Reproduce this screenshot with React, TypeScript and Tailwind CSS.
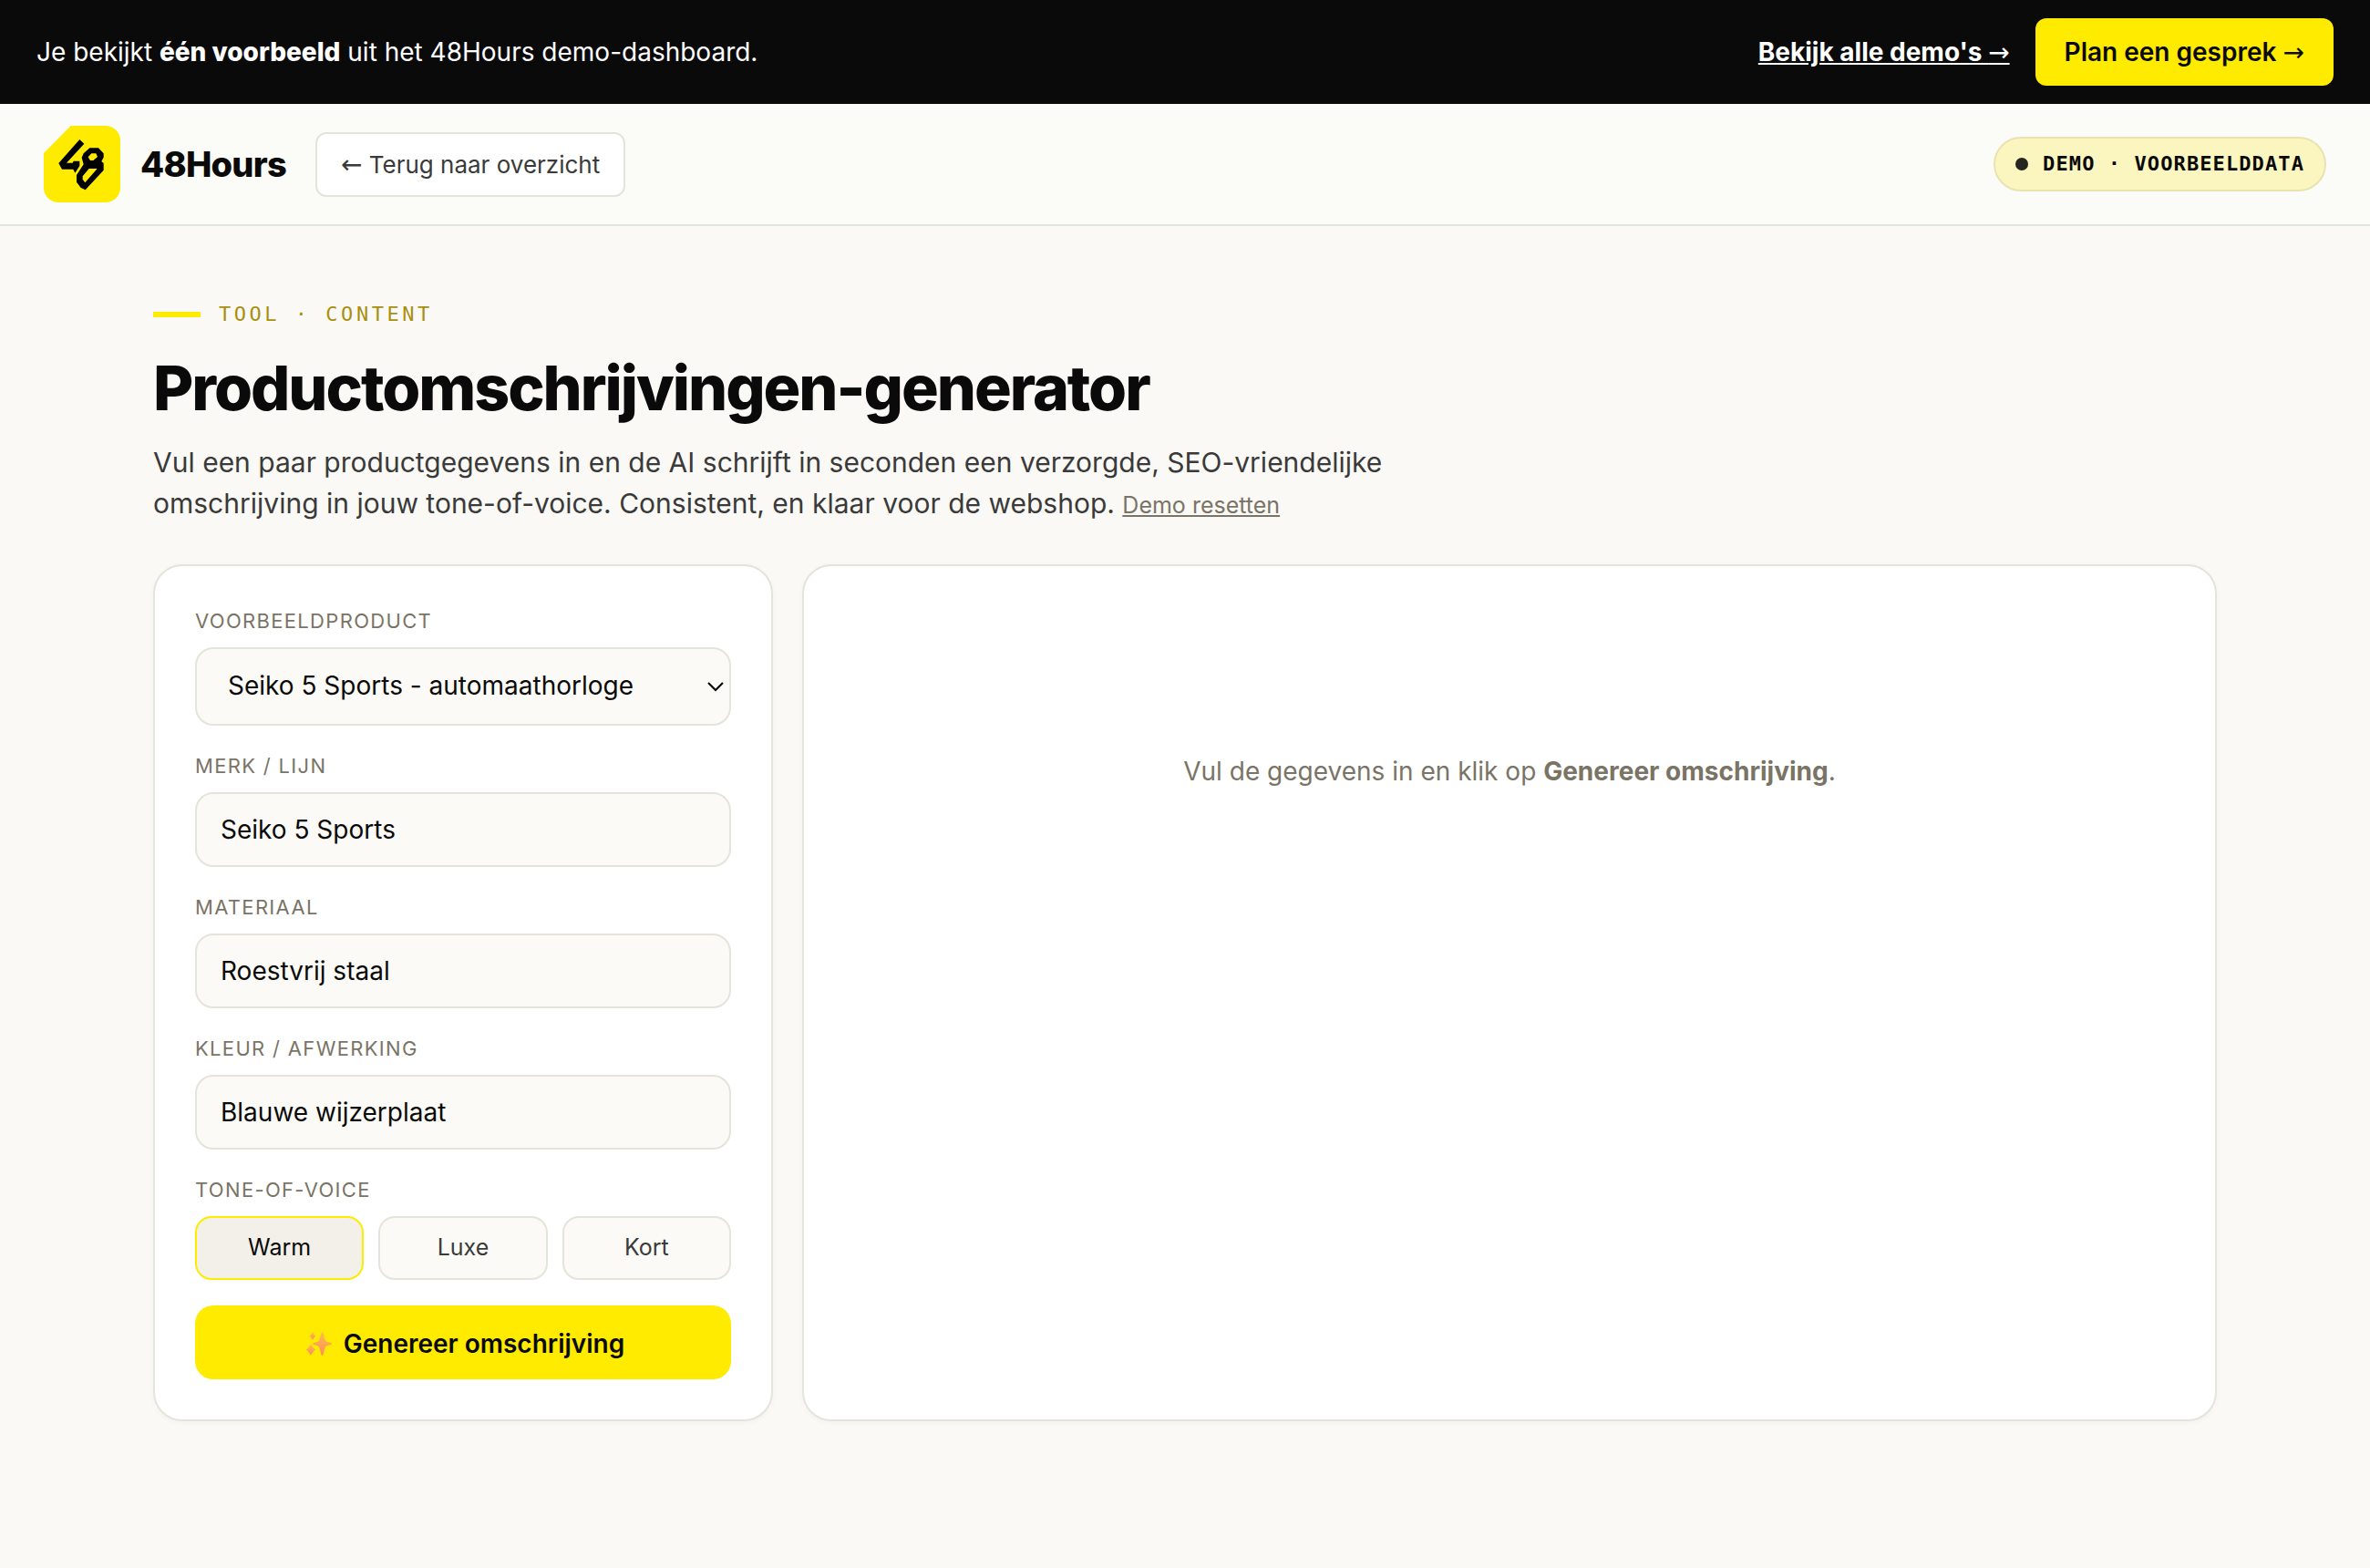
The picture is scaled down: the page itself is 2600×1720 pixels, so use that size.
import { useState } from 'react';

const products = [
  {
    name: 'Seiko 5 Sports - automaathorloge',
    brand: 'Seiko 5 Sports',
    material: 'Roestvrij staal',
    finish: 'Blauwe wijzerplaat'
  }
];

const tones = ['Warm', 'Luxe', 'Kort'];

const labelClasses = 'block mb-3 text-[22px] leading-[33px] tracking-[0.06em] uppercase text-[#7a7466]';

const fieldClasses = 'block w-full rounded-[20px] border-2 border-[#e5e3da] bg-[#fbfaf7] text-[28px] leading-[34px] text-[#0a0a0a] focus:outline-none focus:border-[#ffeb00]';

const cardClasses = 'rounded-[32px] border-2 border-[#e5e3da] bg-white p-11 shadow-[0_2px_6px_rgba(0,0,0,0.03)]';

function Logo() {
  return (
    <svg viewBox="0 0 252 252" className="size-[84px] shrink-0" aria-hidden="true">
      <path d="M89 0H204A48 48 0 0 1 252 48V204A48 48 0 0 1 204 252H48A48 48 0 0 1 0 204V90Z" fill="#ffeb00" />
      <g fill="#000" fillRule="evenodd">
        <path d="M118 45L133 59L75 122H95L98 116H118V132L103 155L97 143H60L49 123Z" />
        <path d="M151 73H180L197 91V104L190 117L197 123V146L137 211L122 204L108 185V162L131 127L125 105L131 91ZM157 91L146 103L153 114H163L177 102L172 91ZM149 141L128 166V176L136 187L176 141Z" />
      </g>
    </svg>
  );
}

function Sparkles() {
  return (
    <svg viewBox="0 0 30 30" className="size-[30px] shrink-0" aria-hidden="true">
      <defs>
        <linearGradient id="spark" x1="0" y1="0" x2="0" y2="1">
          <stop offset="0" stopColor="#fbc044" />
          <stop offset="1" stopColor="#ff8a65" />
        </linearGradient>
      </defs>
      <g fill="url(#spark)">
        <path d="M18.500 2C20 2 20.500 9 22 11.500C23.500 13.500 29 13.700 29 15C29 16.300 23.500 16.500 22 18.500C20.500 21 20 28 18.500 28C17 28 16.500 21 15 18.500C13.500 16.500 8 16.300 8 15C8 13.700 13.500 13.500 15 11.500C16.500 9 17 2 18.500 2Z" />
        <path d="M8 2.500C8.900 2.500 9 5.200 11.500 6.500C9 7.700 8.900 10.500 8 10.500C7.100 10.500 7 7.700 4.500 6.500C7 5.200 7.100 2.500 8 2.500Z" />
        <path d="M6 15.500C7.200 15.500 7.500 19.800 11.500 21.500C7.500 23.200 7.200 27.500 6 27.500C4.800 27.500 4.500 23.200 0.500 21.500C4.500 19.800 4.800 15.500 6 15.500Z" />
      </g>
    </svg>
  );
}

interface TextFieldProps {
  id: string;
  label: string;
  value: string;
  onChange: (value: string) => void;
}

function TextField({ id, label, value, onChange }: TextFieldProps) {
  return (
    <div>
      <label htmlFor={id} className={labelClasses}>{label}</label>
      <input
        id={id}
        type="text"
        value={value}
        onChange={(e) => onChange(e.target.value)}
        className={`${fieldClasses} h-[82px] px-[26px]`}
      />
    </div>
  );
}

function Arrow({ children }: { children: string }) {
  return <span className="font-['DejaVu_Sans',sans-serif] text-[28px] leading-none font-normal">{children}</span>;
}

function DemoBar() {
  return (
    <div className="flex items-center justify-between gap-6 bg-[#0a0a0a] px-10 py-5 text-[28px] leading-[42px] text-white">
      <p>
        Je bekijkt <strong className="font-extrabold">één voorbeeld</strong> uit het 48Hours demo-dashboard.
      </p>
      <div className="flex items-center gap-7">
        <a href="#demos" className="font-bold underline">
          Bekijk alle demo's <Arrow>→</Arrow>
        </a>
        <a href="#gesprek" className="rounded-xl bg-[#ffeb00] px-8 py-4 font-semibold text-[#0a0a0a]">
          Plan een gesprek <Arrow>→</Arrow>
        </a>
      </div>
    </div>
  );
}

function Header() {
  return (
    <header className="flex items-center justify-between border-b-2 border-[#e5e3da] bg-[#fbfbf7] px-12 py-6">
      <div className="flex items-center gap-8">
        <div className="flex items-center gap-[22px]">
          <Logo />
          <span className="text-[38px] font-extrabold tracking-[-0.02em]">48Hours</span>
        </div>
        <a
          href="#overzicht"
          className="rounded-xl border-2 border-[#e5e3da] bg-white px-[26px] py-[14px] text-[26px] leading-[39px] text-[#3a3a3a]"
        >
          <Arrow>←</Arrow> Terug naar overzicht
        </a>
      </div>
      <div className="flex items-center gap-4 rounded-full border-2 border-[#e8e3b0] bg-[#fbf6c0] px-[22px] py-3 font-['DejaVu_Sans_Mono',monospace] text-[22px] leading-8 font-bold tracking-[0.05em]">
        <span className="size-[14px] rounded-full bg-[#25261f]" />
        DEMO · VOORBEELDDATA
      </div>
    </header>
  );
}

export default function App() {
  const [productIndex, setProductIndex] = useState(0);
  const [fields, setFields] = useState(products[0]);
  const [tone, setTone] = useState('Warm');

  const selectProduct = (index: number) => {
    setProductIndex(index);
    setFields(products[index]);
  };

  const reset = () => {
    selectProduct(0);
    setTone('Warm');
  };

  return (
    <div className="min-h-screen bg-[#faf9f6] font-['Inter',sans-serif] text-[#0a0a0a]">
      <DemoBar />
      <Header />

      <main className="mx-auto max-w-[2360px] px-12 pt-20 pb-40">
        <div className="mb-7 flex items-center gap-5 font-['DejaVu_Sans_Mono',monospace] text-[22px] leading-[33px] tracking-[0.16em] text-[#a8900f]">
          <span className="h-[6px] w-[52px] bg-[#ffeb00]" />
          TOOL · CONTENT
        </div>
        <h1 className="mb-6 text-[68px] leading-[72px] font-extrabold tracking-[-0.03em]">
          Productomschrijvingen-generator
        </h1>
        <p className="mb-11 max-w-[1400px] text-[30px] leading-[45px] text-[#3a3a3a]">
          Vul een paar productgegevens in en de AI schrijft in seconden een verzorgde, SEO-vriendelijke
          omschrijving in jouw tone-of-voice. Consistent, en klaar voor de webshop.{' '}
          <button type="button" onClick={reset} className="text-[25px] leading-[30px] text-[#7a7466] underline">
            Demo resetten
          </button>
        </p>

        <div className="grid grid-cols-[680px_1fr] gap-8">
          <form onSubmit={(e) => e.preventDefault()} className={`${cardClasses} flex flex-col gap-7`}>
            <div>
              <label htmlFor="product" className={labelClasses}>Voorbeeldproduct</label>
              <div className="relative">
                <select
                  id="product"
                  value={productIndex}
                  onChange={(e) => selectProduct(Number(e.target.value))}
                  className={`${fieldClasses} h-[86px] appearance-none pr-12 pb-0.5 pl-[34px]`}
                >
                  {products.map((product, index) => (
                    <option key={product.name} value={index}>{product.name}</option>
                  ))}
                </select>
                <svg
                  viewBox="0 0 20 12"
                  className="pointer-events-none absolute top-[37px] right-[7px] h-3 w-5"
                  fill="none"
                  stroke="#0a0a0a"
                  strokeWidth="2.2"
                  aria-hidden="true"
                >
                  <path d="M2 2L10 10L18 2" />
                </svg>
              </div>
            </div>
            <TextField id="brand" label="Merk / lijn" value={fields.brand} onChange={(brand) => setFields({ ...fields, brand })} />
            <TextField id="material" label="Materiaal" value={fields.material} onChange={(material) => setFields({ ...fields, material })} />
            <TextField id="finish" label="Kleur / afwerking" value={fields.finish} onChange={(finish) => setFields({ ...fields, finish })} />

            <div role="group" aria-labelledby="tone-label">
              <span id="tone-label" className={labelClasses}>Tone-of-voice</span>
              <div className="grid grid-cols-3 gap-4">
                {tones.map((item) => (
                  <button
                    key={item}
                    type="button"
                    aria-pressed={tone === item}
                    onClick={() => setTone(item)}
                    className={`h-[70px] rounded-[18px] border-2 text-[25px] ${
                      tone === item
                        ? 'border-[#ffeb00] bg-[#f3f0ea] text-[#0a0a0a]'
                        : 'border-[#e5e3da] bg-[#fbfaf7] text-[#3a3a3a]'
                    }`}
                  >
                    {item}
                  </button>
                ))}
              </div>
            </div>

            <button
              type="submit"
              className="flex h-[81px] items-center justify-center gap-3 rounded-[20px] bg-[#ffeb00] pt-0.5 pl-1 text-[28px] font-semibold"
            >
              <Sparkles />
              Genereer omschrijving
            </button>
          </form>

          <section className={cardClasses}>
            <p className="py-40 text-center text-[28px] leading-[42px] text-[#7a7466]">
              Vul de gegevens in en klik op <strong className="font-bold">Genereer omschrijving</strong>.
            </p>
          </section>
        </div>
      </main>
    </div>
  );
}
